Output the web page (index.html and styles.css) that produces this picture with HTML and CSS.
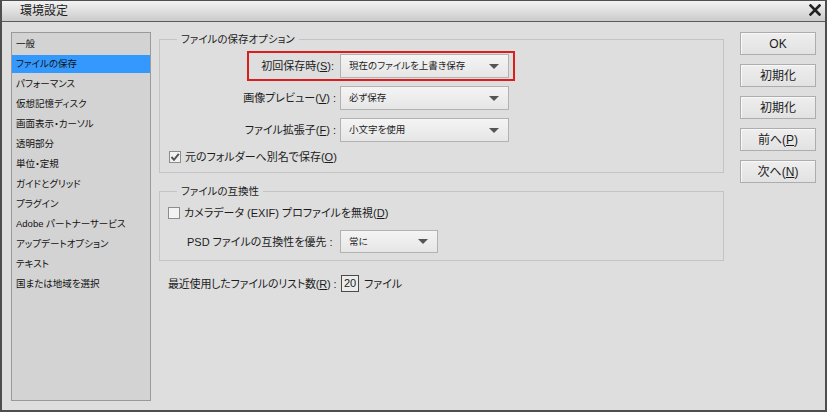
FILE: index.html
```html
<!DOCTYPE html>
<html lang="ja">
<head>
<meta charset="utf-8">
<title>環境設定</title>
<link rel="stylesheet" href="styles.css">
</head>
<body>
<div class="window">
  <div class="titlebar">
    <span class="title">環境設定</span>
    <svg class="close" width="12" height="12" viewBox="0 0 12 12"><path d="M1.5 1.5 L10.5 10.5 M10.5 1.5 L1.5 10.5" stroke="#222" stroke-width="2.6" stroke-linecap="square"/></svg>
  </div>
  <div class="content">
    <ul class="nav">
      <li>一般</li>
      <li class="active">ファイルの保存</li>
      <li>パフォーマンス</li>
      <li>仮想記憶ディスク</li>
      <li>画面表示・カーソル</li>
      <li>透明部分</li>
      <li>単位・定規</li>
      <li>ガイドとグリッド</li>
      <li>プラグイン</li>
      <li>Adobe パートナーサービス</li>
      <li>アップデートオプション</li>
      <li>テキスト</li>
      <li>国または地域を選択</li>
    </ul>
    <div class="main">
      <fieldset class="group g1">
        <legend>ファイルの保存オプション</legend>
        <div class="opt-row first">
          <span class="highlight"></span>
          <span class="opt-label">初回保存時(<u>S</u>):</span>
          <div class="select wide"><span>現在のファイルを上書き保存</span><i class="arrow"></i></div>
        </div>
        <div class="opt-row">
          <span class="opt-label">画像プレビュー(<u>V</u>) :</span>
          <div class="select wide"><span>必ず保存</span><i class="arrow"></i></div>
        </div>
        <div class="opt-row">
          <span class="opt-label">ファイル拡張子(<u>F</u>) :</span>
          <div class="select wide"><span>小文字を使用</span><i class="arrow"></i></div>
        </div>
        <div class="check-row c1">
          <span class="checkbox"><svg width="10" height="10" viewBox="0 0 10 10"><path d="M1.5 5 L4 7.8 L8.8 1.8" fill="none" stroke="#555" stroke-width="2"/></svg></span>
          <span>元のフォルダーへ別名で保存(<u>O</u>)</span>
        </div>
      </fieldset>
      <fieldset class="group g2">
        <legend>ファイルの互換性</legend>
        <div class="check-row c2">
          <span class="checkbox"></span>
          <span>カメラデータ (EXIF) プロファイルを無視(<u>D</u>)</span>
        </div>
        <div class="psd-row">
          <span class="psd-label">PSD ファイルの互換性を優先 :</span>
          <div class="select narrow"><span>常に</span><i class="arrow"></i></div>
        </div>
      </fieldset>
      <div class="recent">
        <span class="recent-label">最近使用したファイルのリスト数(<u>R</u>) :</span>
        <span class="numbox">20</span>
        <span>ファイル</span>
      </div>
    </div>
    <div class="buttons">
      <button class="btn">OK</button>
      <button class="btn">初期化</button>
      <button class="btn">初期化</button>
      <button class="btn">前へ(<u>P</u>)</button>
      <button class="btn">次へ(<u>N</u>)</button>
    </div>
  </div>
</div>
</body>
</html>
```
FILE: styles.css
```css
* { box-sizing: border-box; }
html, body { margin: 0; padding: 0; }
body {
  font-family: "Liberation Sans", "Noto Sans CJK JP", sans-serif;
  color: #1c1c1c;
  background: #dedede;
}
.window {
  width: 827px;
  height: 412px;
  border: 2px solid #4e4e4e;
  border-top-width: 1px;
  background: #dedede;
  display: flex;
  flex-direction: column;
}
.titlebar {
  height: 21px;
  flex: none;
  border-bottom: 1px solid #5a5a5a;
  background: linear-gradient(#f3f3f3, #cbcbcb);
  display: flex;
  align-items: center;
  justify-content: space-between;
  padding: 0 4px 0 18px;
}
.title {
  font-size: 12px;
  line-height: 14px;
  font-feature-settings: "palt";
}
.close { display: block; margin-top: -2px; }
.content {
  flex: 1;
  display: flex;
  align-items: flex-start;
  padding: 9px 9px 0 9px;
}
.nav {
  list-style: none;
  margin: 1px 0 0 0;
  padding: 2px 0 0 0;
  width: 140px;
  height: 369px;
  flex: none;
  background: #d3d3d3;
  border: 1px solid #9a9a9a;
}
.nav li {
  height: 18px;
  margin-bottom: 2px;
  padding-left: 4px;
  font-size: 9.5px;
  line-height: 18px;
  color: #111;
  font-feature-settings: "palt";
  white-space: nowrap;
}
.nav li.active { background: #3399ff; }
.main {
  width: 565px;
  margin-left: 8px;
  flex: none;
  display: flex;
  flex-direction: column;
}
.group {
  margin: 0;
  padding: 0;
  border: 1px solid #c4c4c4;
  min-width: 0;
}
.group legend {
  margin-left: 17px;
  padding: 0 4px;
  font-size: 10.5px;
  line-height: 16px;
  font-feature-settings: "palt";
}
.g1 { padding-bottom: 7px; }
.g2 { margin-top: 10px; padding-bottom: 7px; }
.opt-row {
  position: relative;
  display: flex;
  align-items: center;
  height: 24px;
  margin-top: 8px;
}
.opt-row.first { margin-top: 7px; }
.opt-label {
  width: 176px;
  text-align: right;
  font-size: 11px;
  line-height: 16px;
  font-feature-settings: "palt";
  white-space: nowrap;
}
.first .opt-label { padding-right: 2px; }
.highlight {
  position: absolute;
  left: 87px;
  top: -3px;
  width: 268px;
  height: 30px;
  border: 2px solid #dd1c1c;
  pointer-events: none;
}
.select {
  margin-left: 4px;
  height: 24px;
  border: 1px solid #b2b2b2;
  background: linear-gradient(#f4f4f4, #e6e6e6);
  display: flex;
  align-items: center;
  justify-content: space-between;
  padding: 0 9px 0 8px;
  font-size: 9.5px;
  line-height: 14px;
  font-feature-settings: "palt";
  white-space: nowrap;
}
.select.wide { width: 169px; }
.select.narrow { width: 98px; height: 23px; margin-left: 0; }
.arrow {
  width: 0;
  height: 0;
  border-left: 5px solid transparent;
  border-right: 5px solid transparent;
  border-top: 5px solid #555;
}
.check-row {
  display: flex;
  align-items: center;
  height: 16px;
  padding-left: 9px;
  font-size: 11px;
  line-height: 16px;
  font-feature-settings: "palt";
  white-space: nowrap;
}
.check-row.c1 { margin-top: 7px; }
.check-row.c2 { margin-top: 6px; padding-left: 8px; }
.checkbox {
  width: 12px;
  height: 12px;
  margin-right: 4px;
  border: 1px solid #8c8c8c;
  background: #f2f2f2;
  display: flex;
  align-items: center;
  justify-content: center;
}
.checkbox svg { display: block; }
.psd-row {
  display: flex;
  align-items: center;
  margin-top: 9px;
  padding-left: 27px;
}
.psd-label {
  width: 153px;
  font-size: 11px;
  line-height: 16px;
  font-feature-settings: "palt";
  white-space: nowrap;
}
.recent {
  display: flex;
  align-items: center;
  margin-top: 14px;
  padding-left: 9px;
  font-size: 11px;
  line-height: 16px;
  font-feature-settings: "palt";
  white-space: nowrap;
}
.recent-label { width: 173px; letter-spacing: -0.2px; }
.numbox {
  width: 18px;
  height: 17px;
  margin: 0 5px 0 0;
  border: 1px solid #4a4a4a;
  background: #ececec;
  text-align: center;
  line-height: 15px;
  font-size: 11px;
}
.buttons {
  margin-left: 16px;
  margin-top: 1px;
  width: 76px;
  flex: none;
  display: flex;
  flex-direction: column;
  gap: 9px;
}
.btn {
  height: 23px;
  width: 76px;
  margin: 0;
  padding: 0;
  border: 1px solid #adadad;
  background: linear-gradient(#eeeeee, #e2e2e2);
  box-shadow: inset 1px 1px 0 #f8f8f8;
  font-family: "Liberation Sans", "Noto Sans CJK JP", sans-serif;
  font-size: 12px;
  line-height: 16px;
  color: #1c1c1c;
  font-feature-settings: "palt";
}
```
